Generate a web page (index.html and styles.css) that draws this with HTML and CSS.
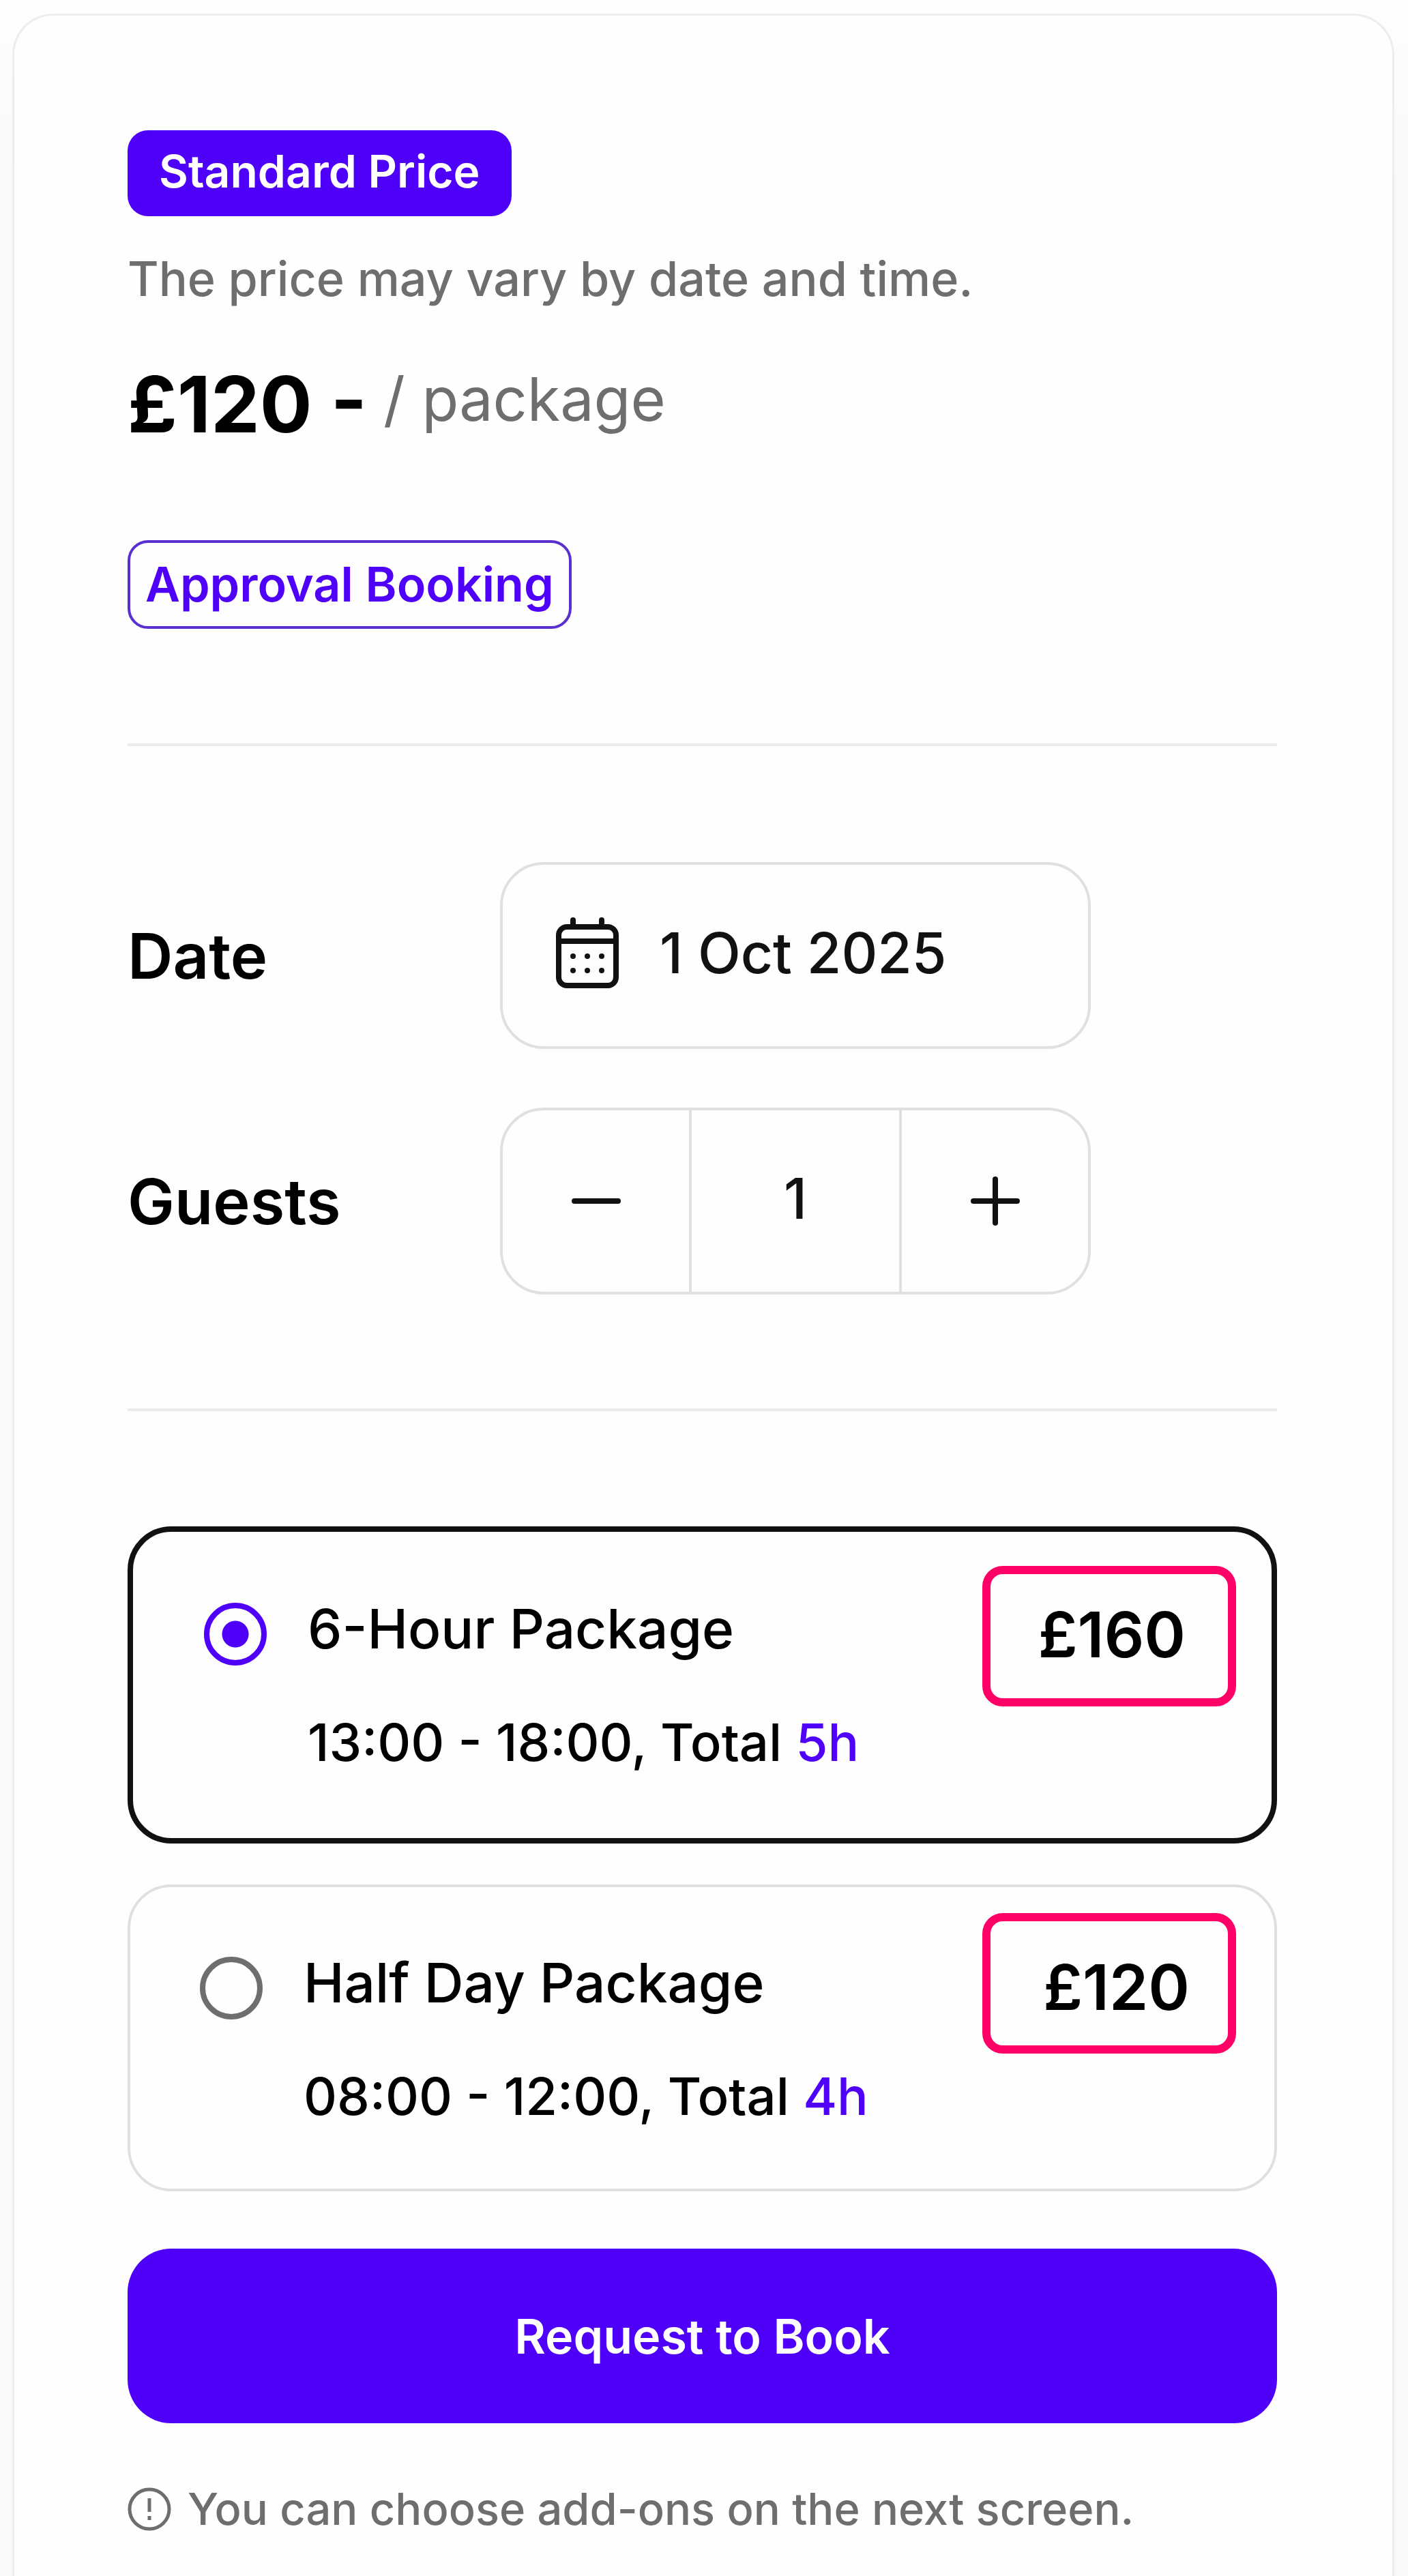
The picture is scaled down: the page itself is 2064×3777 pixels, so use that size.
FILE: index.html
```html
<!DOCTYPE html>
<html lang="en">
<head>
<meta charset="utf-8">
<meta name="viewport" content="width=device-width, initial-scale=1">
<title>Booking</title>
<link rel="stylesheet" href="styles.css">
</head>
<body>
<main class="card">
  <section class="summary">
    <span class="badge badge-solid">Standard Price</span>
    <p class="hint">The price may vary by date and time.</p>
    <p class="price"><strong class="price-value">£120 -</strong><span class="price-unit">/ package</span></p>
    <span class="badge badge-outline">Approval Booking</span>
  </section>

  <form class="booking">
    <div class="fields">
      <label class="field-label" for="date">Date</label>
      <div class="control date-control">
        <svg class="icon-calendar" viewBox="0 0 92 104" fill="none" stroke="currentColor" stroke-width="8" stroke-linecap="round" aria-hidden="true">
          <rect x="4" y="14" width="84" height="86" rx="12"/>
          <path d="M4 35H88M25 4V14M67 4V14"/>
          <g fill="currentColor" stroke="none"><circle cx="25" cy="57" r="4"/><circle cx="46" cy="57" r="4"/><circle cx="67" cy="57" r="4"/><circle cx="25" cy="78" r="4"/><circle cx="46" cy="78" r="4"/><circle cx="67" cy="78" r="4"/></g>
        </svg>
        <input class="date-input" id="date" type="text" value="1 Oct 2025">
      </div>
      <label class="field-label" for="guests">Guests</label>
      <div class="control stepper">
        <button class="step" type="button" aria-label="Fewer guests">
          <svg class="icon-step" viewBox="0 0 76 76" stroke="currentColor" stroke-width="8" stroke-linecap="round" aria-hidden="true"><path d="M6 38H70"/></svg>
        </button>
        <input class="guest-input" id="guests" type="text" inputmode="numeric" value="1">
        <button class="step" type="button" aria-label="More guests">
          <svg class="icon-step" viewBox="0 0 76 76" stroke="currentColor" stroke-width="8" stroke-linecap="round" aria-hidden="true"><path d="M6 38H70M38 6V70"/></svg>
        </button>
      </div>
    </div>

    <div class="packages">
      <label class="package">
        <input class="package-radio" type="radio" name="package" checked>
        <span class="package-text">
          <span class="package-name">6-Hour Package</span>
          <span class="package-time">13:00 - 18:00, Total <span class="accent">5h</span></span>
        </span>
        <span class="package-price">£160</span>
      </label>
      <label class="package">
        <input class="package-radio" type="radio" name="package">
        <span class="package-text">
          <span class="package-name">Half Day Package</span>
          <span class="package-time">08:00 - 12:00, Total <span class="accent">4h</span></span>
        </span>
        <span class="package-price">£120</span>
      </label>
    </div>

    <button class="submit" type="submit">Request to Book</button>
    <p class="note">
      <svg class="icon-info" viewBox="0 0 64 64" fill="none" stroke="currentColor" stroke-width="5" aria-hidden="true"><circle cx="32" cy="32" r="29"/><path d="M32 16V36M32 42V48"/></svg>
      You can choose add-ons on the next screen.
    </p>
  </form>
</main>
</body>
</html>
```
FILE: styles.css
```css
:root {
  --accent: #4f00f9;
  --line: #e0e0e0;
  --muted: #6e6e6e;
}

* {
  box-sizing: border-box;
}

body {
  margin: 0;
  min-height: 100vh;
  padding: 20px 20px 0 18px;
  display: flex;
  background: linear-gradient(#fefefe, #f9f9f9 260px);
  color: #000;
  font-family: Inter, "Liberation Sans", sans-serif;
}

p {
  margin: 0;
}

input,
button {
  font: inherit;
  color: inherit;
}

.card {
  flex: 1;
  padding: 168px 169px 0 166px;
  border: 3px solid #ededed;
  border-bottom: 0;
  border-radius: 60px 60px 0 0;
  background: #fefefe;
}

.summary {
  display: flex;
  flex-direction: column;
  align-items: flex-start;
  padding-bottom: 168px;
  border-bottom: 4px solid #ebebeb;
}

.badge {
  border-radius: 30px;
  font-weight: 600;
}

.badge-solid {
  padding: 0 46px 6px;
  background: var(--accent);
  color: #fff;
  font-size: 66px;
  line-height: 120px;
}

.hint {
  margin-top: 48px;
  color: var(--muted);
  font-size: 70px;
  font-weight: 500;
  line-height: 88px;
}

.price {
  display: flex;
  align-items: center;
  gap: 24px;
  margin-top: 60px;
}

.price-value {
  font-size: 114px;
  font-weight: 700;
  line-height: 160px;
}

.price-unit {
  padding-bottom: 16px;
  color: var(--muted);
  font-size: 88px;
  line-height: 112px;
}

.badge-outline {
  margin-top: 119px;
  padding: 0 22px;
  border: 4px solid #5a2fd0;
  color: var(--accent);
  font-size: 70px;
  line-height: 122px;
}

.fields {
  display: grid;
  grid-template-columns: 546px 866px;
  align-items: center;
  row-gap: 86px;
  padding: 170px 0 167px;
  border-bottom: 4px solid #ebebeb;
}

.field-label {
  font-size: 92px;
  font-weight: 600;
}

.control {
  display: flex;
  height: 274px;
  border: 4px solid var(--line);
  border-radius: 64px;
  color: #111;
  font-size: 82px;
  font-weight: 500;
  overflow: hidden;
}

.date-control {
  align-items: center;
  gap: 60px;
  padding: 0 78px 8px;
}

.icon-calendar {
  flex: none;
  width: 92px;
  height: 104px;
}

.date-input,
.guest-input {
  min-width: 0;
  padding: 0;
  border: 0;
  background: none;
}

.date-input {
  flex: 1;
}

.step {
  flex: 1;
  display: grid;
  place-items: center;
  padding: 0;
  border: 0;
  background: none;
}

.icon-step {
  width: 76px;
  height: 76px;
}

.guest-input {
  width: 312px;
  padding-bottom: 8px;
  border: solid var(--line);
  border-width: 0 4px;
  text-align: center;
}

.packages {
  display: grid;
  gap: 60px;
  padding-top: 169px;
}

.package {
  display: flex;
  align-items: flex-start;
  height: 450px;
  padding: 38px 56px 0 102px;
  border: 4px solid var(--line);
  border-radius: 64px;
}

.package:has(:checked) {
  height: 465px;
  padding: 50px 52px 0 104px;
  border: 8px solid #111;
}

.package-radio {
  appearance: none;
  flex: none;
  width: 92px;
  height: 92px;
  margin: 64px 60px 0 0;
  border: 8px solid var(--muted);
  border-radius: 50%;
}

.package-radio:checked {
  margin-top: 54px;
  border-color: var(--accent);
  background: radial-gradient(circle, var(--accent) 19px, transparent 20px);
}

.package-text {
  flex: 1;
  display: grid;
  gap: 66px;
  padding-top: 52px;
  font-weight: 500;
}

.package:has(:checked) .package-text {
  padding-top: 42px;
}

.package-name {
  font-size: 80px;
  line-height: 100px;
}

.package-time {
  font-size: 76px;
  line-height: 100px;
}

.accent {
  color: var(--accent);
}

.package-price {
  width: 372px;
  height: 206px;
  padding-right: 56px;
  border: 12px solid #ff0066;
  border-radius: 30px;
  font-size: 92px;
  font-weight: 600;
  line-height: 194px;
  text-align: right;
}

.package:has(:checked) .package-price {
  padding-right: 62px;
  line-height: 178px;
}

.submit {
  display: block;
  width: 100%;
  height: 256px;
  margin-top: 84px;
  border: 0;
  border-radius: 64px;
  background: var(--accent);
  color: #fff;
  font-size: 70px;
  font-weight: 600;
}

.note {
  display: flex;
  align-items: center;
  gap: 24px;
  margin-top: 82px;
  padding-bottom: 48px;
  color: var(--muted);
  font-size: 65px;
  font-weight: 500;
  line-height: 88px;
}

.icon-info {
  flex: none;
  width: 64px;
  height: 64px;
}
```
